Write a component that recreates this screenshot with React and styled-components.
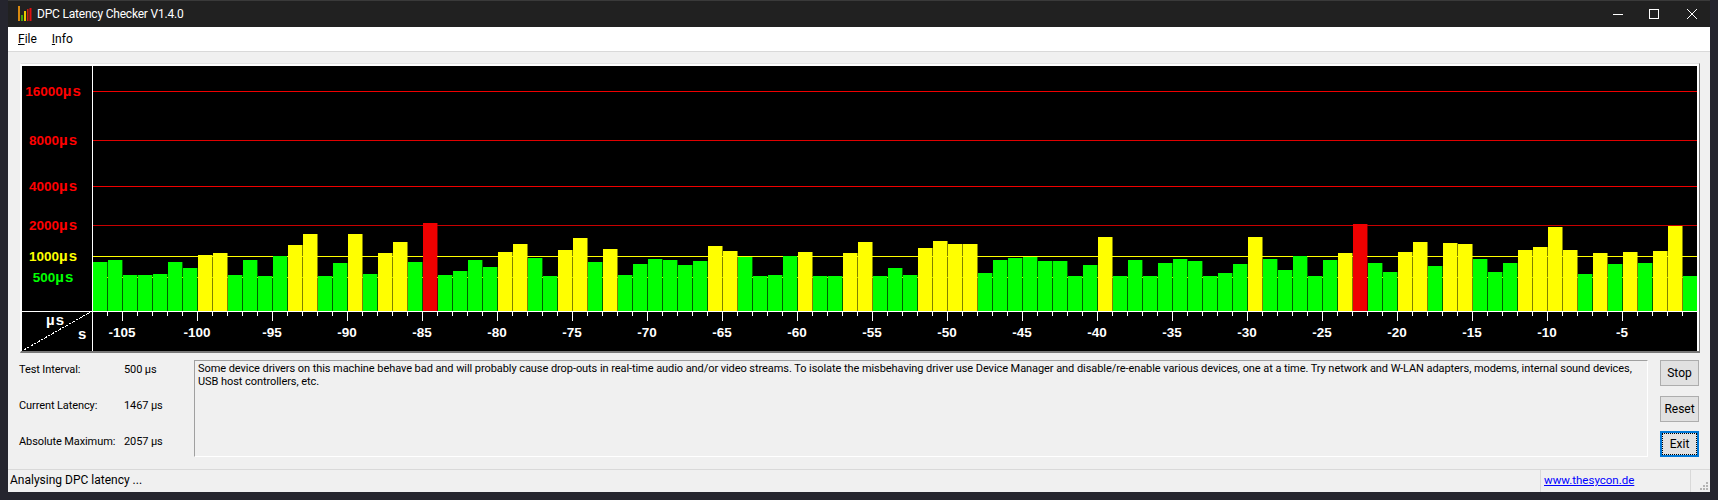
import React from "react";
import styled, { createGlobalStyle } from "styled-components";

const UI_FONT = 'Roboto, "Noto Sans", "Liberation Sans", sans-serif';

const Global = createGlobalStyle`
  html, body { margin: 0; padding: 0; background: #25252e; }
  #root { width: 1718px; height: 500px; overflow: hidden; }
`;

const Desktop = styled.div`
  box-sizing: border-box;
  width: 1718px;
  height: 500px;
  padding: 0 8px 8px;
  background: #25252e;
`;
const Window = styled.div`
  display: flex;
  flex-direction: column;
  height: 492px;
  background: #f0f0f0;
  font-family: ${UI_FONT};
  font-size: 12px;
  color: #000;
`;
const TitleBar = styled.div`
  box-sizing: border-box;
  flex: none;
  display: flex;
  align-items: center;
  height: 27px;
  padding: 0 13px 0 10px;
  background: #212121;
  border-top: 1px solid #3a3a3a;
  color: #fff;
  font-size: 12px;
  letter-spacing: -0.2px;
`;
const AppIcon = styled.svg`
  flex: none;
  margin-right: 5px;
`;
const TitleText = styled.span`
  flex: 1;
  white-space: nowrap;
`;
const WinButton = styled.svg`
  flex: none;
  margin-left: ${(p) => p.$gap}px;
`;
const MenuBar = styled.div`
  box-sizing: border-box;
  flex: none;
  display: flex;
  align-items: center;
  gap: 15px;
  height: 25px;
  padding: 0 0 1px 10px;
  background: #fff;
  border-bottom: 1px solid #d9d9d9;
  font-size: 12px;
`;
const MenuItem = styled.span`
  color: #000;
`;
const Content = styled.div`
  flex: 1;
  min-height: 0;
  display: flex;
  flex-direction: column;
  padding: 11px 10px 0 12px;
`;
const ChartFrame = styled.div`
  flex: none;
  border-top: 1px solid #e3e3e3;
  border-left: 1px solid #fff;
  border-right: 1px solid #777;
  border-bottom: 2px solid #777;
`;
const ChartInner = styled.div`
  border-top: 2px solid #fff;
  border-left: 1px solid #fff;
  border-right: 2px solid #fff;
`;
const ChartSvg = styled.svg`
  display: block;
  width: 1675px;
  height: 285px;
  background: #000;
  font-family: "Liberation Sans", Arial, sans-serif;
  font-weight: 700;
  font-size: 13.5px;
`;
const Lower = styled.div`
  flex: none;
  display: flex;
  height: 97px;
  margin: 7px 1px 0 -1px;
`;
const InfoPanel = styled.div`
  flex: none;
  width: 175px;
  display: flex;
  flex-direction: column;
  gap: 18px;
  font-size: 11px;
  letter-spacing: -0.1px;
`;
const InfoRow = styled.div`
  display: flex;
  align-items: center;
  height: 18px;
`;
const InfoLabel = styled.span`
  width: 105px;
  white-space: nowrap;
`;
const InfoValue = styled.span`
  white-space: nowrap;
`;
const MessageBox = styled.div`
  box-sizing: border-box;
  flex: 1;
  min-width: 0;
  padding: 1px 3px;
  font-size: 11px;
  letter-spacing: -0.067px;
  line-height: 13px;
  white-space: nowrap;
  border: 1px solid;
  border-color: #a0a0a0 #fff #fff #a0a0a0;
  color: #000;
`;
const ButtonColumn = styled.div`
  flex: none;
  width: 39px;
  margin-left: 12px;
  display: flex;
  flex-direction: column;
  justify-content: space-between;
`;
const PushButton = styled.button`
  box-sizing: border-box;
  width: 39px;
  height: 26px;
  padding: 0;
  font-family: ${UI_FONT};
  font-size: 12px;
  color: #000;
  background: #e1e1e1;
  border: ${(p) => (p.$focused ? "2px solid #0078d7" : "1px solid #adadad")};
  outline: ${(p) => (p.$focused ? "1px dotted #000" : "none")};
  outline-offset: -3px;
`;
const StatusBar = styled.div`
  box-sizing: border-box;
  flex: none;
  display: flex;
  height: 23px;
  border-top: 1px solid #d9d9d9;
  font-size: 12px;
`;
const StatusText = styled.div`
  flex: 1;
  padding: 3px 0 0 2px;
  white-space: nowrap;
`;
const StatusLinkCell = styled.div`
  flex: none;
  box-sizing: border-box;
  width: 150px;
  padding: 3px 0 0 3px;
  border-left: 1px solid #d9d9d9;
  font-size: 11.5px;
`;
const StatusLink = styled.a`
  color: #0000ff;
  text-decoration: underline;
`;
const GripCell = styled.div`
  flex: none;
  box-sizing: border-box;
  width: 20px;
  display: flex;
  justify-content: flex-end;
  align-items: flex-end;
  padding: 0 2px 2px 0;
  border-left: 1px solid #d9d9d9;
`;

const HEIGHTS = [
  49, 51, 36, 36, 37, 49, 43, 56, 58, 36, 51, 35, 55, 66, 77, 35, 48, 77, 37, 58, 69, 49, 88,
  36, 40, 51, 44, 59, 67, 53, 35, 61, 73, 49, 62, 36, 47, 52, 51, 46, 50, 65, 60, 54, 35, 36, 55, 59, 35, 35, 58, 69,
  35, 43, 36, 63, 70, 67, 67, 38, 51, 53, 54, 50, 50, 35, 46, 74, 35, 51, 35, 48, 52, 50, 35, 38, 47, 74, 52, 41,
  55, 35, 51, 58, 87, 48, 39, 59, 69, 45, 68, 67, 52, 39, 48, 61, 64, 84, 61, 37, 58, 47, 59, 48, 60, 85, 35,
];

const GRID = [
  { y: 91, label: "16000", color: "#f00000", text: "#ff0000" },
  { y: 140, label: "8000", color: "#e00000", text: "#ff0000" },
  { y: 186, label: "4000", color: "#f00000", text: "#ff0000" },
  { y: 225, label: "2000", color: "#c80000", text: "#ff0000" },
  { y: 256, label: "1000", color: "#ffff00", text: "#ffff00" },
  { y: 277, label: "500", color: "#c8e800", text: "#00ff00" },
];

const BASE = 311;
const barColor = (h) => (h >= 86 ? ["#f00000", "#700000"] : h >= 56 ? ["#ffff00", "#808000"] : ["#00ff00", "#006000"]);

const MAJORS = [];
for (let s = 105; s >= 5; s -= 5) MAJORS.push({ s, x: 122 + (105 - s) * 15 });
const TICKS = Array.from({ length: 106 }, (_, k) => 107 + 15 * k);

function LatencyChart() {
  return (
    <ChartSvg viewBox="22 66 1675 285" shapeRendering="crispEdges">
      {HEIGHTS.map((h, i) => (
        <rect key={i} x={107 + 15 * i} y={BASE - h} width={1} height={h} fill={barColor(h)[1]} />
      ))}
      {GRID.map((g) => (
        <rect key={g.y} x={92} y={g.y} width={1605} height={1} fill={g.color} />
      ))}
      {HEIGHTS.map((h, i) => (
        <rect key={i} x={93 + 15 * i} y={BASE - h} width={14} height={h} fill={barColor(h)[0]} />
      ))}
      {GRID.map((g) => (
        <text key={g.y} x={53.5} y={g.y + 5} textAnchor="middle" fill={g.text}>
          {g.label}
          <tspan fontSize="15" letterSpacing="1">µs</tspan>
        </text>
      ))}
      <rect x={92} y={66} width={1} height={285} fill="#fff" />
      <rect x={22} y={311} width={1675} height={1} fill="#fff" />
      {TICKS.map((x) => (
        <rect key={x} x={x} y={312} width={1} height={4} fill="#fff" />
      ))}
      {MAJORS.map((m) => (
        <rect key={m.s} x={m.x} y={312} width={1} height={9} fill="#fff" />
      ))}
      {MAJORS.map((m) => (
        <text key={m.s} x={m.x} y={337} textAnchor="middle" fill="#fff">-{m.s}</text>
      ))}
      <line x1={92} y1={311} x2={22} y2={351} stroke="#fff" strokeDasharray="3 1" />
      <text x={46} y={325} fill="#fff" fontSize="15" letterSpacing="1">µs</text>
      <text x={78} y={339} fill="#fff" fontSize="15">s</text>
    </ChartSvg>
  );
}

export default function App() {
  return (
    <Desktop>
      <Global />
      <Window>
        <TitleBar>
          <AppIcon width="14" height="16" viewBox="0 0 14 16">
            <rect x="0" y="0" width="2" height="15" fill="#d88a10" />
            <rect x="3" y="9" width="2" height="6" fill="#3fa010" />
            <rect x="6" y="5" width="2" height="10" fill="#e8c800" />
            <rect x="9" y="3" width="1.5" height="12" fill="#c82010" />
            <rect x="11.5" y="2" width="2" height="13" fill="#e01010" />
          </AppIcon>
          <TitleText>DPC Latency Checker V1.4.0</TitleText>
          <WinButton $gap={0} width="10" height="10" viewBox="0 0 10 10">
            <path d="M0 5.5H10" stroke="#fff" fill="none" />
          </WinButton>
          <WinButton $gap={26} width="10" height="10" viewBox="0 0 10 10">
            <rect x="0.5" y="0.5" width="9" height="9" stroke="#fff" fill="none" />
          </WinButton>
          <WinButton $gap={28} width="10" height="10" viewBox="0 0 10 10">
            <path d="M0 0L10 10M10 0L0 10" stroke="#fff" fill="none" />
          </WinButton>
        </TitleBar>
        <MenuBar>
          <MenuItem><u>F</u>ile</MenuItem>
          <MenuItem><u>I</u>nfo</MenuItem>
        </MenuBar>
        <Content>
          <ChartFrame>
            <ChartInner>
              <LatencyChart />
            </ChartInner>
          </ChartFrame>
          <Lower>
            <InfoPanel>
              <InfoRow><InfoLabel>Test Interval:</InfoLabel><InfoValue>500 µs</InfoValue></InfoRow>
              <InfoRow><InfoLabel>Current Latency:</InfoLabel><InfoValue>1467 µs</InfoValue></InfoRow>
              <InfoRow><InfoLabel>Absolute Maximum:</InfoLabel><InfoValue>2057 µs</InfoValue></InfoRow>
            </InfoPanel>
            <MessageBox>
              Some device drivers on this machine behave bad and will probably cause drop-outs in real-time audio and/or video streams. To isolate the misbehaving driver use Device Manager and disable/re-enable various devices, one at a time. Try network and W-LAN adapters, modems, internal sound devices,
              <br />
              USB host controllers, etc.
            </MessageBox>
            <ButtonColumn>
              <PushButton>Stop</PushButton>
              <PushButton>Reset</PushButton>
              <PushButton $focused>Exit</PushButton>
            </ButtonColumn>
          </Lower>
        </Content>
        <StatusBar>
          <StatusText>Analysing DPC latency ...</StatusText>
          <StatusLinkCell><StatusLink href="#">www.thesycon.de</StatusLink></StatusLinkCell>
          <GripCell>
            <svg width="8" height="8" viewBox="0 0 8 8" fill="#b4b4b4">
              <rect x="6" y="0" width="2" height="2" />
              <rect x="3" y="3" width="2" height="2" />
              <rect x="6" y="3" width="2" height="2" />
              <rect x="0" y="6" width="2" height="2" />
              <rect x="3" y="6" width="2" height="2" />
              <rect x="6" y="6" width="2" height="2" />
            </svg>
          </GripCell>
        </StatusBar>
      </Window>
    </Desktop>
  );
}
